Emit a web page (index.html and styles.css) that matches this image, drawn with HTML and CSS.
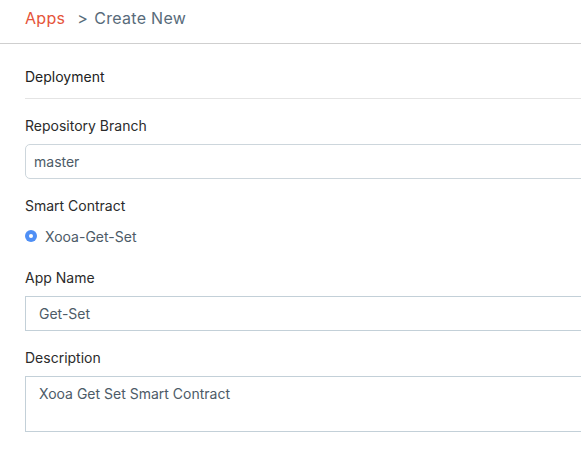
FILE: index.html
```html
<!DOCTYPE html>
<html>
<head>
<meta charset="utf-8">
<link rel="stylesheet" href="styles.css">
</head>
<body>
<div class="page">
  <header class="crumbs">
    <span class="crumb-root">Apps</span>
    <span class="crumb-sep">&gt;</span>
    <span class="crumb-current">Create New</span>
  </header>
  <main class="content">
    <h2 class="section-title">Deployment</h2>
    <div class="field first">
      <label class="label">Repository Branch</label>
      <div class="input rounded">master</div>
    </div>
    <div class="field">
      <label class="label">Smart Contract</label>
      <div class="radio-row">
        <span class="radio"><span class="radio-dot"></span></span>
        <span class="radio-label">Xooa-Get-Set</span>
      </div>
    </div>
    <div class="field after-radio">
      <label class="label">App Name</label>
      <div class="input square">Get-Set</div>
    </div>
    <div class="field">
      <label class="label">Description</label>
      <div class="textarea">Xooa Get Set Smart Contract</div>
    </div>
  </main>
</div>
</body>
</html>
```

FILE: styles.css
```css
* { box-sizing: border-box; }
html, body { margin: 0; padding: 0; background: #ffffff; }
body {
  font-family: Inter, "Noto Sans", sans-serif;
  color: #2b2b2b;
}
.page { width: 100%; overflow: hidden; height: 475px; }
.crumbs {
  height: 44px;
  border-bottom: 1px solid #cfcfcf;
  padding: 7px 0 0 25px;
  font-size: 16px;
  letter-spacing: 0.3px;
  display: flex;
  gap: 10px;
  line-height: 22px;
}
.crumb-root { color: #e5543a; }
.crumb-sep, .crumb-current { color: #586b7a; }
.crumb-sep { margin-left: 2px; margin-right: -4px; }
.content { padding: 0 0 0 25px; margin-right: -12px; }
.section-title {
  margin: 0;
  font-size: 14px;
  font-weight: 400;
  line-height: 20px;
  padding: 23px 0 11px;
  border-bottom: 1px solid #e4e4e4;
  color: #222;
}
.field { display: flex; flex-direction: column; margin-top: 17px; }
.field.after-radio { margin-top: 22px; }
.label {
  font-size: 14px;
  line-height: 20px;
  color: #2b2b2b;
}
.input {
  margin-top: 8px;
  height: 35px;
  border: 1px solid #c3d0d8;
  font-size: 14px;
  color: #4d5b67;
  display: flex;
  align-items: center;
}
.rounded { border-radius: 5px; padding-left: 8px; border-color: #cdd6dc; }
.square { padding-left: 13px; }
.radio-row {
  margin-top: 10px;
  display: flex;
  align-items: center;
  gap: 8px;
  height: 20px;
}
.radio {
  width: 12px;
  height: 12px;
  border-radius: 50%;
  background: #4f8ff5;
  display: flex;
  align-items: center;
  justify-content: center;
}
.radio-dot {
  width: 4px;
  height: 4px;
  border-radius: 50%;
  background: #ffffff;
}
.radio-label { font-size: 14px; color: #4d5b67; }
.textarea {
  margin-top: 8px;
  height: 56px;
  border: 1px solid #c3d0d8;
  padding: 7px 13px;
  font-size: 14px;
  line-height: 20px;
  color: #4d5b67;
}
```
